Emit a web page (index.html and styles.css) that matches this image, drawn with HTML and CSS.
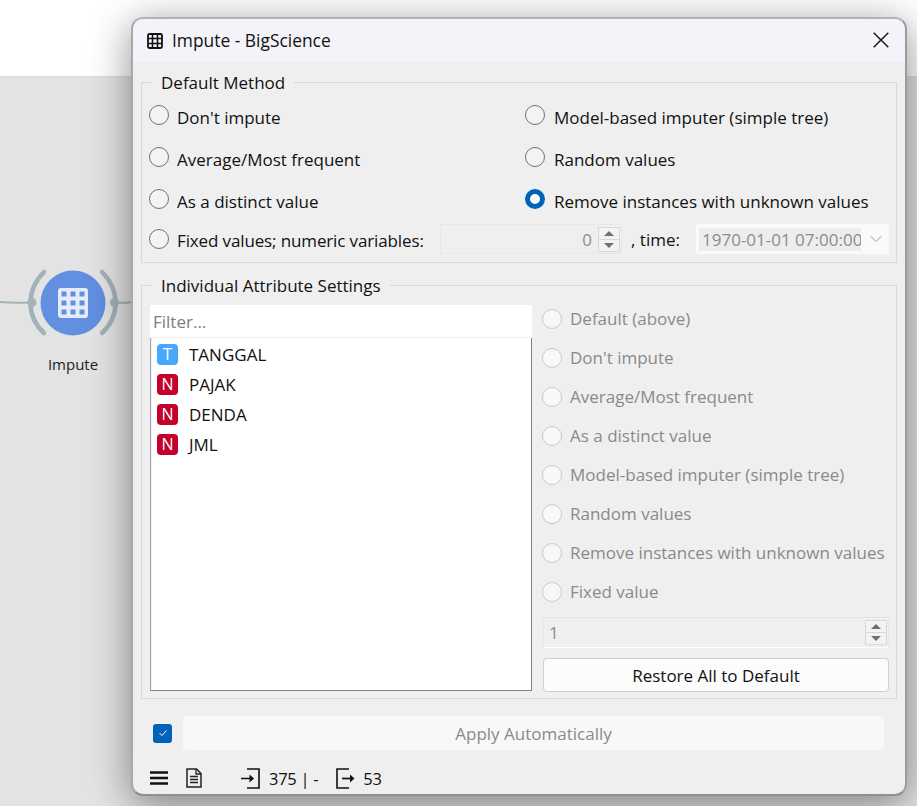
FILE: index.html
```html
<!DOCTYPE html>
<html lang="en">
<head>
<meta charset="utf-8">
<title>Impute - BigScience</title>
<link rel="stylesheet" href="styles.css">
</head>
<body>
<div class="desk">
  <div class="topbar"></div>
  <svg class="node" width="131" height="110" viewBox="0 0 131 110">
    <path d="M0 42 C10 43 20 43 30 42.500" class="wire"/>
    <path d="M115 42.500 C120 43 126 43 131 42" class="wire"/>
    <path d="M44 12 C26 30 26 56 44 73" class="arc"/>
    <path d="M102 12 C120 30 120 56 102 73" class="arc"/>
    <circle cx="32" cy="42.500" r="4.500" class="dot"/>
    <circle cx="114.500" cy="42.500" r="4.500" class="dot"/>
    <circle cx="73" cy="43" r="32.500" class="disc"/>
    <rect x="58" y="28" width="30" height="30" rx="3" class="tile"/>
    <g class="cells">
      <rect x="61.500" y="31.500" width="5" height="5" rx=".5"/><rect x="70.500" y="31.500" width="5" height="5" rx=".5"/><rect x="79.500" y="31.500" width="5" height="5" rx=".5"/>
      <rect x="61.500" y="40.500" width="5" height="5" rx=".5"/><rect x="70.500" y="40.500" width="5" height="5" rx=".5"/><rect x="79.500" y="40.500" width="5" height="5" rx=".5"/>
      <rect x="61.500" y="49.500" width="5" height="5" rx=".5"/><rect x="70.500" y="49.500" width="5" height="5" rx=".5"/><rect x="79.500" y="49.500" width="5" height="5" rx=".5"/>
    </g>
  </svg>
  <div class="node-label">Impute</div>

  <div class="win">
    <header class="title">
      <svg class="title-icon" width="16" height="16" viewBox="0 0 16 16">
        <rect x="1" y="1" width="14" height="14" rx="1.500" fill="none" stroke="#111" stroke-width="1.800"/>
        <path d="M5.500 1V15M10.500 1V15M1 5.500H15M1 10.500H15" stroke="#111" stroke-width="1.600" fill="none"/>
      </svg>
      <span class="title-text">Impute - BigScience</span>
      <svg class="close" width="16" height="16" viewBox="0 0 16 16"><path d="M.7.700L15.300 15.300M15.300.7L.7 15.300" stroke="#111" stroke-width="1.400" fill="none"/></svg>
    </header>

    <div class="body">
      <section class="group group-a">
        <h2 class="legend">Default Method</h2>
        <div class="method-grid">
          <label class="opt"><span class="radio"></span>Don't impute</label>
          <label class="opt"><span class="radio"></span>Model-based imputer (simple tree)</label>
          <label class="opt"><span class="radio"></span>Average/Most frequent</label>
          <label class="opt"><span class="radio"></span>Random values</label>
          <label class="opt"><span class="radio"></span>As a distinct value</label>
          <label class="opt"><span class="radio radio-on"></span>Remove instances with unknown values</label>
        </div>
        <div class="fixed-row">
          <label class="opt"><span class="radio"></span>Fixed values; numeric variables:</label>
          <div class="spin spin-num">
            <span class="spin-val">0</span>
            <span class="arrows"><i class="up"></i><i class="down"></i></span>
          </div>
          <span class="time-label">, time:</span>
          <div class="combo">
            <span class="combo-text">1970-01-01 07:00:00</span>
            <svg width="14" height="8" viewBox="0 0 14 8"><path d="M1.500 1L7 6.500L12.500 1" fill="none" stroke="#c4c4c4" stroke-width="1.200"/></svg>
          </div>
        </div>
      </section>

      <section class="group group-b">
        <h2 class="legend">Individual Attribute Settings</h2>
        <div class="attr-cols">
          <div class="attr-left">
            <div class="filter">Filter...</div>
            <ul class="list">
              <li><span class="badge badge-t">T</span>TANGGAL</li>
              <li><span class="badge badge-n">N</span>PAJAK</li>
              <li><span class="badge badge-n">N</span>DENDA</li>
              <li><span class="badge badge-n">N</span>JML</li>
            </ul>
          </div>
          <div class="attr-right">
            <label class="dopt"><span class="radio radio-off"></span>Default (above)</label>
            <label class="dopt"><span class="radio radio-off"></span>Don't impute</label>
            <label class="dopt"><span class="radio radio-off"></span>Average/Most frequent</label>
            <label class="dopt"><span class="radio radio-off"></span>As a distinct value</label>
            <label class="dopt"><span class="radio radio-off"></span>Model-based imputer (simple tree)</label>
            <label class="dopt"><span class="radio radio-off"></span>Random values</label>
            <label class="dopt"><span class="radio radio-off"></span>Remove instances with unknown values</label>
            <label class="dopt"><span class="radio radio-off"></span>Fixed value</label>
            <div class="spin spin-wide">
              <span class="spin-val">1</span>
              <span class="arrows"><i class="up"></i><i class="down"></i></span>
            </div>
            <button class="btn" type="button">Restore All to Default</button>
          </div>
        </div>
      </section>

      <div class="apply-row">
        <span class="check"><svg width="10" height="8" viewBox="0 0 10 8"><path d="M1.500 4L4 6.500L8.500 1.500" fill="none" stroke="#fff" stroke-width="1"/></svg></span>
        <div class="apply">Apply Automatically</div>
      </div>

      <footer class="status">
        <svg class="st-menu" width="18" height="14" viewBox="0 0 18 14"><path d="M0 1.500H18M0 7H18M0 12.500H18" stroke="#111" stroke-width="2.400"/></svg>
        <svg class="st-doc" width="16" height="20" viewBox="0 0 16 20"><path d="M1 1H10.500L15 5.500V19H1Z" fill="none" stroke="#222" stroke-width="1.500"/><path d="M10 1V6H15M4 8.500H12M4 11.500H12M4 14.500H12" fill="none" stroke="#222" stroke-width="1.300"/></svg>
        <svg class="st-in" width="19" height="21" viewBox="0 0 19 21"><path d="M6 1H18V20H6" fill="none" stroke="#111" stroke-width="1.600"/><path d="M0 10.500H12" fill="none" stroke="#111" stroke-width="1.700"/><path d="M8.500 6.500L13 10.500L8.500 14.500Z" fill="#111"/></svg>
        <span class="st-num">375 | -</span>
        <svg class="st-out" width="19" height="21" viewBox="0 0 19 21"><path d="M13 1H1V20H13" fill="none" stroke="#111" stroke-width="1.600"/><path d="M6 10.500H15" fill="none" stroke="#111" stroke-width="1.700"/><path d="M14 6.500L18.500 10.500L14 14.500Z" fill="#111"/></svg>
        <span class="st-num">53</span>
      </footer>
    </div>
  </div>
</div>
</body>
</html>
```

FILE: styles.css
```css
* { box-sizing: border-box; }
html, body { margin: 0; padding: 0; }
body { font-family: "Open Sans", "Noto Sans", sans-serif; color: #111; font-size: 17px; }
.desk { position: relative; width: 917px; height: 806px; background: #e3e3e3; overflow: hidden; }
.topbar { height: 77px; background: #fff; border-bottom: 1px solid #dcdcdc; }

.node { position: absolute; left: 0; top: 260px; }
.wire { fill: none; stroke: #a3b2b9; stroke-width: 2; }
.arc { fill: none; stroke: #a3b2b9; stroke-width: 4.500; stroke-linecap: round; }
.dot { fill: #a3b2b9; }
.disc { fill: #628fe0; }
.tile { fill: #e4ebf9; }
.cells rect { fill: #628fe0; }
.node-label { position: absolute; left: 33px; width: 80px; top: 354px; text-align: center; font-size: 15px; color: #222; }

.win {
  position: absolute; left: 131px; top: 17px; width: 776px; height: 779px;
  background: #efefef; border-radius: 12px; border: 2px solid #b3b3b3; border-left-color: #a9a9a9; border-bottom-color: #8f8f8f; border-right-color: #9c9c9c;
  box-shadow: 0 8px 40px rgba(0,0,0,.45); display: flex; flex-direction: column; overflow: hidden;
}
.title { height: 43px; flex: none; background: #f3f3f9; display: flex; align-items: center; padding: 0 16px 0 14px; }
.title-icon { flex: none; }
.title-text { margin-left: 9px; font-size: 17.400px; flex: 1; margin-top: -2px; }
.close { margin-top: -1px; }
.body { flex: 1; padding: 20px 8px 0; display: flex; flex-direction: column; }

.group { position: relative; border: 1px solid #d9d9d9; }
.group-a { height: 181px; padding: 12px 7px 0; margin-bottom: 22px; }
.group-b { height: 414px; padding: 19px 7px 0 8px; margin-bottom: 17px; }
.legend { position: absolute; left: 10px; top: -11px; margin: 0; padding: 0 9px; background: #efefef; font: inherit; line-height: 21px; color: #111; }

.radio { flex: none; width: 20px; height: 20px; border-radius: 50%; border: 1.300px solid #6e6e6e; background: #f3f3f3; margin-right: 8px; margin-top: -4px; }
.radio-on { border: 5.500px solid #0063b8; background: #fff; }
.radio-off { border-color: #c9c9c9; background: #f8f8f8; margin-right: 8px; margin-top: 0; }

.opt { display: flex; align-items: center; white-space: nowrap; padding-top: 2px; }
.method-grid { display: grid; grid-template-columns: 376px 1fr; grid-auto-rows: 42px; }
.method-grid .opt:nth-child(even) .radio { margin-right: 9px; }
.fixed-row { display: flex; align-items: center; height: 36px; }
.fixed-row .opt { width: 291px; letter-spacing: -.13px; }
.fixed-row .radio { margin-top: -2px; }

.spin { position: relative; display: flex; align-items: center; border: 1px solid #e8e8e8; background: #efefef; color: #8c8c8c; }
.spin-num { width: 182px; height: 30px; justify-content: flex-end; padding-right: 29px; }
.spin-wide { height: 31px; padding-left: 5px; margin: 6px 0 0 1px; border-bottom-color: #fff; border-top-color: #e4e4e4; }
.arrows { position: absolute; right: 1px; top: 2px; width: 22px; height: 25px; display: flex; flex-direction: column; border: 1px solid #d8d8d8; background: #f3f3f3; }
.arrows i { flex: 1; display: flex; align-items: center; justify-content: center; }
.arrows i::after { content: ""; width: 0; height: 0; border-left: 5px solid transparent; border-right: 5px solid transparent; }
.arrows .up { border-bottom: 1px solid #d8d8d8; }
.up::after { border-bottom: 5px solid #707070; }
.down::after { border-top: 5px solid #707070; }

.time-label { margin-left: 9px; width: 65px; white-space: nowrap; }
.combo { width: 193px; height: 30px; background: #fafafa; display: flex; align-items: center; padding: 0 3px; color: #8c8c8c; }
.combo-text { width: 162px; height: 23px; line-height: 23px; background: #ededed; overflow: hidden; white-space: nowrap; padding-left: 3px; flex: none; }
.combo svg { margin-left: 8px; }

.attr-cols { display: flex; }
.attr-left { width: 382px; flex: none; display: flex; flex-direction: column; }
.filter { height: 32px; background: #fff; line-height: 33px; padding-left: 3px; color: #7d7d7d; }
.list { list-style: none; margin: 1px 0 0; padding: 1px 0 0 1px; height: 353px; background: #fff; border-left: 1px solid #a4a4ac; border-bottom: 1px solid #7f7f8c; border-right: 1px solid #7f7f8c; box-shadow: inset 1px 0 0 #f2f2f2; }
.list li { height: 30px; display: flex; align-items: center; padding-left: 5px; }
.badge { width: 21px; height: 21px; border-radius: 4px; color: #fff; display: flex; align-items: center; justify-content: center; font-size: 16px; margin-right: 11px; flex: none; }
.badge-t { background: #48a9fb; }
.badge-n { background: #c5002a; }

.attr-right { flex: 1; margin-left: 10px; display: flex; flex-direction: column; color: #8a8a8a; min-width: 0; }
.dopt { display: flex; align-items: center; height: 39px; white-space: nowrap; }
.dopt:first-child { margin-top: -6px; }
.btn { margin: 10px 0 0 1px; height: 34px; background: #fcfcfc; border: 1px solid #cfcfcf; border-radius: 4px; font: inherit; color: #111; padding: 0; }

.apply-row { display: flex; align-items: center; height: 34px; padding-left: 12px; flex: none; }
.check { width: 19px; height: 19px; border-radius: 3px; background: #0063b8; display: flex; align-items: center; justify-content: center; margin-right: 11px; flex: none; }
.apply { width: 701px; height: 34px; background: #f8f8f8; border-radius: 4px; text-align: center; line-height: 35px; color: #8a8a8a; }

.status { display: flex; align-items: center; height: 22px; margin-top: 17px; padding-left: 9px; flex: none; font-size: 16.500px; }
.st-menu { flex: none; }
.st-doc { margin-left: 18px; flex: none; }
.st-in { margin-left: 39px; flex: none; }
.st-out { margin-left: 18px; flex: none; }
.st-num { margin-left: 9px; white-space: nowrap; letter-spacing: -.3px; }
.st-out + .st-num { margin-left: 8px; letter-spacing: 0; }
```
